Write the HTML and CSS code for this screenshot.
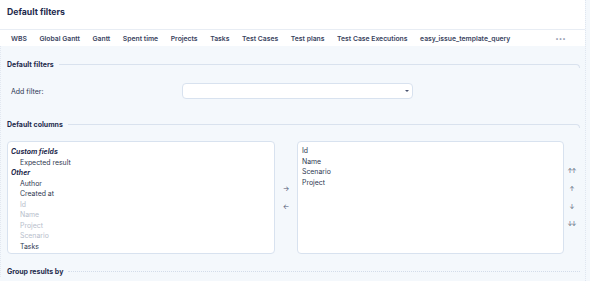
FILE: index.html
```html
<!DOCTYPE html>
<html>
<head>
<meta charset="utf-8">
<link rel="stylesheet" href="styles.css">
</head>
<body>
<div class="page">
  <header class="head">
    <h1 class="title">Default filters</h1>
  </header>
  <nav class="tabs">
    <span class="tab">WBS</span>
    <span class="tab">Global Gantt</span>
    <span class="tab">Gantt</span>
    <span class="tab">Spent time</span>
    <span class="tab">Projects</span>
    <span class="tab">Tasks</span>
    <span class="tab">Test Cases</span>
    <span class="tab">Test plans</span>
    <span class="tab">Test Case Executions</span>
    <span class="tab">easy_issue_template_query</span>
    <span class="more">•••</span>
  </nav>
  <main class="main">
    <div class="legend"><span class="legend-text">Default filters</span><span class="legend-line"></span></div>
    <div class="filter-row">
      <label class="filter-label">Add filter:</label>
      <div class="select"><span class="caret"></span></div>
    </div>
    <div class="legend legend-cols"><span class="legend-text">Default columns</span><span class="legend-line"></span></div>
    <div class="columns">
      <div class="listbox available">
        <div class="group">Custom fields</div>
        <div class="item">Expected result</div>
        <div class="group">Other</div>
        <div class="item">Author</div>
        <div class="item">Created at</div>
        <div class="item muted">Id</div>
        <div class="item muted">Name</div>
        <div class="item muted">Project</div>
        <div class="item muted">Scenario</div>
        <div class="item">Tasks</div>
        <div class="item">Test plans</div>
      </div>
      <div class="arrows">
        <span class="arrow">&#8594;</span>
        <span class="arrow">&#8592;</span>
      </div>
      <div class="listbox selected">
        <div class="item">Id</div>
        <div class="item">Name</div>
        <div class="item">Scenario</div>
        <div class="item">Project</div>
      </div>
      <div class="movers">
        <span class="mv dbl">&#8593;&#8593;</span>
        <span class="mv">&#8593;</span>
        <span class="mv">&#8595;</span>
        <span class="mv dbl">&#8595;&#8595;</span>
      </div>
    </div>
    <div class="legend legend-group"><span class="legend-text">Group results by</span><span class="legend-line dotted"></span></div>
  </main>
</div>
</body>
</html>
```
FILE: styles.css
```css
* { box-sizing: border-box; }
html, body { margin: 0; padding: 0; }
body {
  font-family: Inter, "Noto Sans", sans-serif;
  color: #2c3752;
  background: #f4f8fc;
  width: 590px;
  height: 281px;
  overflow: hidden;
}
.page {
  border-right: 1px dotted #dfe6f0;
  width: 586px;
  height: 281px;
  overflow: hidden;
}
.head {
  background: #fff;
  height: 29px;
  padding: 7px 0 0 7px;
}
.title {
  margin: 0;
  font-size: 8.7px;
  font-weight: 700;
  color: #1f2b4d;
  line-height: 11px;
}
.tabs {
  background: #fff;
  height: 17px;
  border-top: 1px solid #e8edf4;
  display: flex;
  align-items: center;
  padding-left: 11px;
  font-size: 6.8px;
  font-weight: 600;
  color: #39435e;
}
.tab { margin-right: 12.6px; white-space: nowrap; }
.more { margin-left: auto; margin-right: 19px; font-size: 6px; color: #8a93a8; letter-spacing: 0.5px; }
.main {
  border-left: 1px dotted #e2e8f1;
  padding: 12px 5px 0 6px;
}
.legend {
  display: flex;
  align-items: center;
  height: 12px;
}
.legend-text {
  font-size: 7px;
  font-weight: 700;
  color: #1f2b4d;
  padding-right: 5px;
  white-space: nowrap;
}
.legend-line {
  flex: 1;
  height: 4px;
  margin-top: 4px;
  border-top: 1px solid #d9e2ee;
  border-right: 1px solid #d9e2ee;
  border-top-right-radius: 4px;
}
.legend-line.dotted {
  border-top: 1px dotted #d3dcea;
  border-right: 0;
  border-radius: 0;
}
.filter-row {
  display: flex;
  align-items: center;
  margin-top: 13px;
  height: 16px;
}
.filter-label {
  width: 175px;
  padding-left: 4px;
  font-size: 7px;
  color: #2c3752;
}
.select {
  width: 231px;
  height: 16px;
  background: #fff;
  border: 1px solid #d8e2ef;
  border-radius: 4px;
  position: relative;
}
.caret {
  position: absolute;
  right: 3px;
  top: 6px;
  border-left: 2px solid transparent;
  border-right: 2px solid transparent;
  border-top: 2px solid #4a5470;
}
.legend-cols { margin-top: 19px; }
.columns {
  display: flex;
  margin-top: 11px;
  height: 113px;
}
.listbox {
  width: 268px;
  height: 113px;
  background: #fff;
  border: 1px solid #d8e2ef;
  border-radius: 4px;
  padding: 4px 0 0 3px;
  overflow: hidden;
  font-size: 6.9px;
  line-height: 10.5px;
}
.listbox.available { padding-top: 5px; }
.listbox.selected { width: 267px; }
.group { font-weight: 700; font-style: italic; color: #1f2b4d; }
.item { padding-left: 9px; color: #2e3850; }
.selected .item { padding-left: 1px; }
.muted { color: #b7becb; }
.arrows {
  width: 22px;
  display: flex;
  flex-direction: column;
  align-items: center;
  padding-top: 43px;
  gap: 8px;
  font-size: 7px;
  color: #4a5470;
}
.arrow { line-height: 10px; }
.movers {
  flex: 1;
  display: flex;
  flex-direction: column;
  align-items: center;
  padding-top: 25px;
  gap: 7.8px;
  font-size: 6.5px;
  color: #4a5470;
}
.mv { line-height: 10px; }
.dbl { letter-spacing: -1.5px; padding-right: 1.5px; }
.legend-group { margin-top: 11px; }
```
